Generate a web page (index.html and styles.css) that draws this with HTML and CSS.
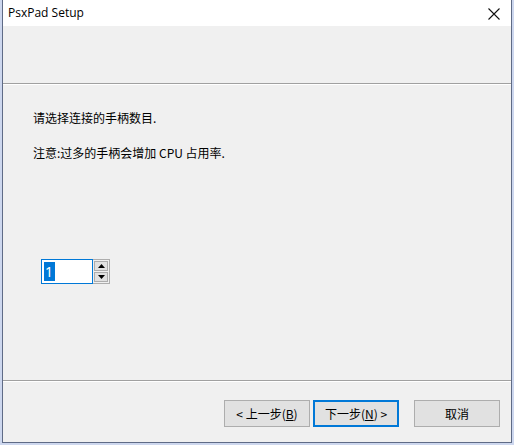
FILE: index.html
```html
<!DOCTYPE html>
<html>
<head>
<meta charset="utf-8">
<link rel="stylesheet" href="styles.css">
</head>
<body>
<div class="frame">
  <div class="win">
    <div class="titlebar">
      <span class="title">PsxPad Setup</span>
      <svg class="close" width="12" height="12" viewBox="0 0 12 12"><path d="M0.5 0.5 L11.5 11.5 M11.5 0.5 L0.5 11.5" stroke="#111" stroke-width="1.1" fill="none"/></svg>
    </div>
    <div class="header"></div>
    <div class="sep"></div>
    <div class="content">
      <p class="line1">请选择连接的手柄数目.</p>
      <p class="line2">注意:过多的手柄会增加 CPU 占用率.</p>
      <div class="spin">
        <div class="edit"><span class="sel">1</span></div>
        <div class="arrows">
          <div class="arr"><svg width="7" height="4" viewBox="0 0 7 4"><path d="M0 4 L3.5 0 L7 4 Z" fill="#000"/></svg></div>
          <div class="arr"><svg width="7" height="4" viewBox="0 0 7 4"><path d="M0 0 L3.5 4 L7 0 Z" fill="#000"/></svg></div>
        </div>
      </div>
    </div>
    <div class="sep"></div>
    <div class="footer">
      <button class="btn">&lt; 上一步(<u>B</u>)</button>
      <button class="btn def">下一步(<u>N</u>) &gt;</button>
      <button class="btn cancel">取消</button>
    </div>
  </div>
</div>
</body>
</html>
```
FILE: styles.css
```css
html, body {
  margin: 0;
  padding: 0;
}
body {
  width: 514px;
  height: 445px;
  overflow: hidden;
  font-family: "Noto Sans CJK SC", "Noto Sans", sans-serif;
  font-size: 12px;
  color: #000;
}
.frame {
  width: 514px;
  height: 445px;
  box-sizing: border-box;
  background: #cdd7ee;
  padding: 0 2px 2px 2px;
}
.win {
  height: 443px;
  box-sizing: border-box;
  border: 1px solid #5f6b86;
  border-top: none;
  background: #f0f0f0;
  display: flex;
  flex-direction: column;
}
.titlebar {
  height: 26px;
  flex: none;
  background: #fff;
  display: flex;
  align-items: center;
  justify-content: space-between;
  padding: 0 11px 0 5px;
}
.title {
  font-family: "Open Sans", "Noto Sans", sans-serif;
  font-size: 12px;
  color: #000;
  margin-top: -1px;
}
.close {
  margin-top: 1px;
}
.header {
  height: 57px;
  flex: none;
}
.sep {
  height: 1px;
  flex: none;
  background: #a0a0a0;
  border-bottom: 1px solid #fff;
}
.content {
  flex: 1;
  padding: 0 30px;
}
.content p {
  margin: 0;
  line-height: 16px;
}
.line1 {
  margin-top: 25px !important;
}
.line2 {
  margin-top: 19px !important;
}
.spin {
  display: flex;
  margin-top: 98px;
  margin-left: 8px;
  width: 70px;
  height: 25px;
}
.edit {
  width: 52px;
  height: 25px;
  box-sizing: border-box;
  border: 1px solid #0078d7;
  background: #fff;
  padding: 2px 0 0 2px;
}
.sel {
  display: inline-block;
  background: #0078d7;
  color: #fff;
  font-family: "Noto Sans", sans-serif;
  font-size: 14px;
  line-height: 19px;
  padding: 0 2px 0 1px;
}
.arrows {
  width: 17px;
  height: 25px;
  box-sizing: border-box;
  border: 1px solid #adadad;
  border-left: none;
  background: #f0f0f0;
  display: flex;
  flex-direction: column;
  padding: 1px;
  gap: 1px;
}
.arr {
  flex: 1;
  background: #e1e1e1;
  border: 1px solid #adadad;
  display: flex;
  align-items: center;
  justify-content: center;
}
.footer {
  height: 60px;
  flex: none;
  box-sizing: border-box;
  display: flex;
  align-items: flex-start;
  padding: 18px 0 0 221px;
}
.btn {
  width: 86px;
  height: 27px;
  box-sizing: border-box;
  background: #e1e1e1;
  border: 1px solid #adadad;
  font-family: "Noto Sans CJK SC", sans-serif;
  font-size: 12px;
  color: #000;
  padding: 0;
  margin: 0 3px 0 0;
}
.btn.def {
  border: 2px solid #0078d7;
}
.btn.cancel {
  margin-left: 12px;
}
```
